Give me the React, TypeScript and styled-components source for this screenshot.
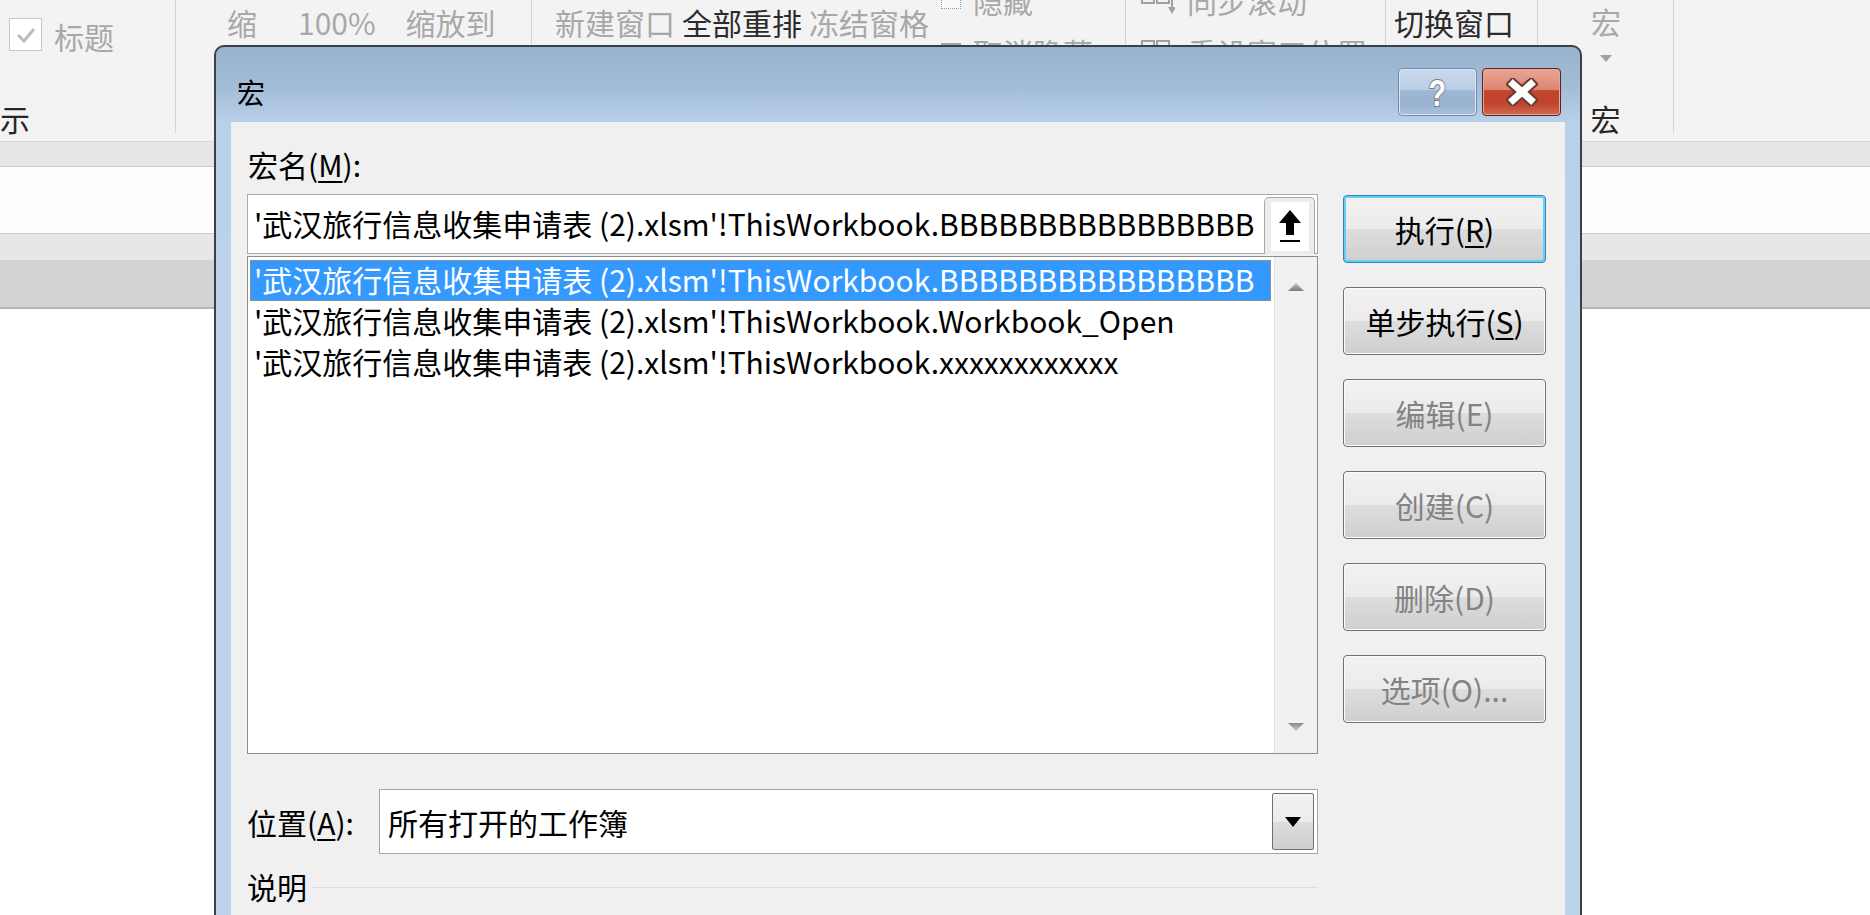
import styled, { createGlobalStyle } from "styled-components";

const GlobalStyle = createGlobalStyle`
  html, body {
    margin: 0;
    padding: 0;
  }
  body {
    overflow: hidden;
    background: #ffffff;
    font-family: "Noto Sans CJK SC", "Noto Sans", sans-serif;
  }
`;

const Screen = styled.div`
  position: relative;
  width: 1870px;
  height: 915px;
  overflow: hidden;
  background: #ffffff;
`;

/* ---------- ribbon behind the dialog ---------- */

const Ribbon = styled.div`
  display: flex;
  height: 141px;
  background: #f3f3f3;
  overflow: hidden;
`;

const Group = styled.div<{ $w: number }>`
  flex: 0 0 ${(p) => p.$w}px;
  display: flex;
  flex-direction: column;
  height: 141px;
`;

const GroupTop = styled.div`
  height: 100px;
  display: flex;
  align-items: flex-start;
`;

const GroupLabel = styled.div<{ $shift?: number; $center?: boolean }>`
  height: 41px;
  font-size: 30px;
  line-height: 36px;
  color: #262626;
  white-space: nowrap;
  text-align: ${(p) => (p.$center ? "center" : "left")};
  margin-left: ${(p) => p.$shift ?? 0}px;
`;

const Divider = styled.div`
  flex: 0 0 1px;
  height: 133px;
  background: #d3d3d3;
`;

const RibbonText = styled.span<{ $x: number; $y?: number; $dim?: boolean }>`
  margin-left: ${(p) => p.$x}px;
  margin-top: ${(p) => p.$y ?? 4}px;
  font-size: 30px;
  line-height: 36px;
  white-space: nowrap;
  color: ${(p) => (p.$dim ? "#a8a8a8" : "#2b2b2b")};
`;

const CheckBox = styled.span`
  margin: 18px 0 0 9px;
  width: 31px;
  height: 31px;
  border: 1px solid #c9c9c9;
  background: #ffffff;
  display: flex;
  align-items: center;
  justify-content: center;
`;

const SmallStack = styled.div<{ $x: number }>`
  margin-left: ${(p) => p.$x}px;
  margin-top: -18px;
  display: flex;
  flex-direction: column;
  gap: 16px;
`;

const SmallRow = styled.div`
  display: flex;
  align-items: center;
  gap: 12px;
  height: 36px;
  font-size: 30px;
  line-height: 36px;
  color: #a8a8a8;
  white-space: nowrap;
`;

const DottedIcon = styled.span`
  width: 18px;
  height: 16px;
  border: 1px dotted #9a9a9a;
  background: #fafafa;
`;

const GreyIcon = styled.span`
  width: 20px;
  height: 18px;
  background: #a5a5a5;
`;

const MacroBig = styled.div`
  margin-left: 53px;
  margin-top: 3px;
  display: flex;
  flex-direction: column;
  align-items: center;
  font-size: 30px;
  line-height: 36px;
  color: #a8a8a8;
`;

/* ---------- sheet bands ---------- */

const NameBand = styled.div`
  height: 26px;
  box-sizing: border-box;
  background: #e6e6e6;
  border-top: 1px solid #d6d6d6;
  border-bottom: 1px solid #cccccc;
`;

const FormulaBar = styled.div`
  height: 66px;
  background: #fdfdfd;
`;

const HeaderBand = styled.div`
  height: 27px;
  box-sizing: border-box;
  background: #e7e7e7;
  border-top: 1px solid #cdcdcd;
`;

const ColumnHeaders = styled.div`
  height: 49px;
  box-sizing: border-box;
  background: #d3d3d3;
  border-bottom: 2px solid #b6b6b6;
`;

/* ---------- dialog ---------- */

const Dialog = styled.div`
  position: absolute;
  left: 214px;
  top: 45px;
  width: 1368px;
  height: 900px;
  box-sizing: border-box;
  border: 2px solid #3b4048;
  border-bottom: none;
  border-radius: 10px 10px 0 0;
  background: linear-gradient(
    to bottom,
    #98b3d0 0px,
    #a3bcd7 40px,
    #b8d0e9 75px,
    #bcd3ea 300px,
    #bcd3ea 100%
  );
  padding: 0 15px;
  display: flex;
  flex-direction: column;
`;

const TitleBar = styled.div`
  height: 75px;
  flex: 0 0 75px;
  display: flex;
  align-items: flex-start;
`;

const Title = styled.div`
  margin: 27px 0 0 6px;
  font-size: 28px;
  line-height: 36px;
  color: #000000;
  flex: 1;
`;

const CaptionButton = styled.div<{ $close?: boolean }>`
  margin-top: 21px;
  margin-left: ${(p) => (p.$close ? 5 : 0)}px;
  margin-right: ${(p) => (p.$close ? 4 : 0)}px;
  width: 79px;
  height: 48px;
  box-sizing: border-box;
  border-radius: 4px;
  border: 1px solid ${(p) => (p.$close ? "#5a2220" : "#6f8cad")};
  box-shadow: inset 0 0 0 1px ${(p) => (p.$close ? "#e9a796" : "#dbe6f3")};
  background: ${(p) =>
    p.$close
      ? "linear-gradient(to bottom, #e9a696 0%, #dc8670 45%, #c3452e 47%, #c0432d 75%, #cf6a52 100%)"
      : "linear-gradient(to bottom, #c9daee 0%, #b9cde5 45%, #9db7d4 47%, #98b2cf 75%, #a9c1dc 100%)"};
  display: flex;
  align-items: center;
  justify-content: center;
`;

const HelpMark = styled.span`
  font-family: "Liberation Sans", Arial, sans-serif;
  font-weight: 700;
  font-size: 37px;
  line-height: 37px;
  color: #ffffff;
  -webkit-text-stroke: 2px #737a82;
  paint-order: stroke fill;
  transform: scaleX(0.78);
  margin-top: 2px;
`;

const Content = styled.div`
  flex: 1;
  background: #f0f0f0;
  display: grid;
  grid-template-columns: 1071px 203px;
  column-gap: 25px;
  padding: 0 19px 0 16px;
  align-items: start;
`;

const LeftColumn = styled.div`
  display: flex;
  flex-direction: column;
`;

const FieldLabel = styled.div`
  height: 72px;
  box-sizing: border-box;
  padding: 24px 0 0 1px;
  font-size: 30px;
  line-height: 36px;
  color: #000000;
`;

const Mnemonic = styled.u`
  text-decoration-thickness: 2px;
  text-underline-offset: 4px;
`;

const NameInput = styled.div`
  height: 60px;
  box-sizing: border-box;
  border: 1px solid #a9a9a9;
  background: #ffffff;
  display: flex;
  align-items: flex-start;
`;

const InputText = styled.div`
  flex: 1;
  padding-left: 6px;
  font-size: 30px;
  line-height: 56px;
  color: #000000;
  white-space: nowrap;
  overflow: hidden;
`;

const CollapseButton = styled.div`
  margin: 2px 2px 0 0;
  width: 51px;
  height: 57px;
  box-sizing: border-box;
  border: 1px solid #a7a7a7;
  border-bottom: none;
  border-radius: 5px 5px 0 0;
  background: #ececec;
  display: flex;
  justify-content: center;
  padding-top: 4px;
`;

const CollapseFace = styled.div`
  width: 38px;
  height: 49px;
  background: #ffffff;
  display: flex;
  align-items: center;
  justify-content: center;
`;

const ListBox = styled.div`
  margin-top: 2px;
  height: 498px;
  box-sizing: border-box;
  border: 1px solid #8a8f96;
  background: #ffffff;
  display: flex;
`;

const ListRows = styled.div`
  flex: 1;
  padding: 3px 3px 0 2px;
`;

const ListRow = styled.div<{ $selected?: boolean }>`
  height: 41px;
  box-sizing: border-box;
  padding-left: 4px;
  font-size: 30px;
  line-height: 39px;
  white-space: nowrap;
  overflow: hidden;
  color: ${(p) => (p.$selected ? "#ffffff" : "#000000")};
  background: ${(p) => (p.$selected ? "#3399ff" : "transparent")};
  outline: ${(p) => (p.$selected ? "1px dotted #d08a3c" : "none")};
  outline-offset: -1px;
`;

const ScrollTrack = styled.div`
  flex: 0 0 43px;
  box-sizing: border-box;
  background: #f1f1f1;
  border-left: 1px solid #e4e4e4;
  display: flex;
  flex-direction: column;
  align-items: center;
  justify-content: space-between;
  padding: 25px 0 21px;
`;

const LocationRow = styled.div`
  margin-top: 35px;
  height: 65px;
  display: flex;
  align-items: center;
`;

const LocationLabel = styled.div`
  flex: 0 0 132px;
  font-size: 30px;
  line-height: 36px;
  color: #000000;
`;

const Combo = styled.div`
  flex: 1;
  height: 65px;
  box-sizing: border-box;
  border: 1px solid #a5a5a5;
  background: #ffffff;
  display: flex;
  align-items: center;
  padding: 3px 3px 3px 8px;
`;

const ComboText = styled.div`
  flex: 1;
  font-size: 30px;
  line-height: 36px;
  color: #000000;
`;

const DropButton = styled.div`
  width: 42px;
  height: 57px;
  box-sizing: border-box;
  border: 1px solid #707070;
  border-radius: 2px;
  background: linear-gradient(
    to bottom,
    #f2f2f2 0%,
    #ebebeb 50%,
    #dddddd 50%,
    #cfcfcf 100%
  );
  display: flex;
  align-items: center;
  justify-content: center;
`;

const DescriptionRow = styled.div`
  margin-top: 14px;
  display: flex;
  align-items: center;
  gap: 5px;
  font-size: 30px;
  line-height: 36px;
  color: #000000;
`;

const Rule = styled.div`
  flex: 1;
  height: 1px;
  background: #d5dfe5;
  margin-top: 2px;
`;

const ButtonColumn = styled.div`
  padding-top: 73px;
  display: flex;
  flex-direction: column;
  gap: 24px;
`;

const DialogButton = styled.div<{ $default?: boolean; $disabled?: boolean }>`
  height: 68px;
  box-sizing: border-box;
  border-radius: 4px;
  border: 1px solid ${(p) => (p.$default ? "#3c7fb1" : "#707070")};
  box-shadow: ${(p) =>
    p.$default
      ? "inset 0 0 0 2px #5fd0f8"
      : "inset 0 0 0 1px #fbfbfb"};
  background: linear-gradient(
    to bottom,
    #f2f2f2 0%,
    #ebebeb 50%,
    #dddddd 50%,
    #cfcfcf 100%
  );
  display: flex;
  align-items: center;
  justify-content: center;
  font-size: 30px;
  line-height: 36px;
  color: ${(p) => (p.$disabled ? "#838383" : "#000000")};
`;

const rowPrefix = "'武汉旅行信息收集申请表 (2).xlsm'!ThisWorkbook.";
const macros = ["BBBBBBBBBBBBBBBB", "Workbook_Open", "xxxxxxxxxxxx"];

const buttons = [
  { label: "执行", key: "R", default: true },
  { label: "单步执行", key: "S" },
  { label: "编辑(E)", disabled: true },
  { label: "创建(C)", disabled: true },
  { label: "删除(D)", disabled: true },
  { label: "选项(O)...", disabled: true },
];

function ScrollArrow({ down }: { down?: boolean }) {
  return (
    <svg width="18" height="10" viewBox="0 0 18 10">
      <defs>
        <linearGradient id={down ? "sd" : "su"} x1="0" y1="0" x2="0" y2="1">
          <stop offset="0" stopColor={down ? "#8a8a8a" : "#c4c4c4"} />
          <stop offset="1" stopColor={down ? "#c8c8c8" : "#7d7d7d"} />
        </linearGradient>
      </defs>
      <polygon
        points={down ? "1,1 17,1 9,9" : "9,1 17,9 1,9"}
        fill={`url(#${down ? "sd" : "su"})`}
      />
    </svg>
  );
}

export default function App() {
  return (
    <Screen>
      <GlobalStyle />
      <Ribbon>
        <Group $w={175}>
          <GroupTop>
            <CheckBox>
              <svg width="22" height="18" viewBox="0 0 22 18">
                <polyline
                  points="3,9 9,15 19,3"
                  fill="none"
                  stroke="#bdbdbd"
                  strokeWidth="3"
                />
              </svg>
            </CheckBox>
            <RibbonText $x={12} $y={18} $dim>
              标题
            </RibbonText>
          </GroupTop>
          <GroupLabel $shift={-30}>显示</GroupLabel>
        </Group>
        <Divider />
        <Group $w={355}>
          <GroupTop>
            <RibbonText $x={51} $dim>
              缩
            </RibbonText>
            <RibbonText $x={41} $dim>
              100%
            </RibbonText>
            <RibbonText $x={30} $dim>
              缩放到
            </RibbonText>
          </GroupTop>
          <GroupLabel $center>显示比例</GroupLabel>
        </Group>
        <Divider />
        <Group $w={593}>
          <GroupTop>
            <RibbonText $x={23} $dim>
              新建窗口
            </RibbonText>
            <RibbonText $x={7}>全部重排</RibbonText>
            <RibbonText $x={7} $dim>
              冻结窗格
            </RibbonText>
            <SmallStack $x={12}>
              <SmallRow>
                <DottedIcon />
                隐藏
              </SmallRow>
              <SmallRow>
                <GreyIcon />
                取消隐藏
              </SmallRow>
            </SmallStack>
          </GroupTop>
          <GroupLabel $center>窗口</GroupLabel>
        </Group>
        <Divider />
        <Group $w={259}>
          <GroupTop>
            <SmallStack $x={15}>
              <SmallRow>
                <svg width="34" height="30" viewBox="0 0 34 30">
                  <rect x="1" y="4" width="12" height="14" fill="none" stroke="#a0a0a0" strokeWidth="2" />
                  <rect x="16" y="4" width="12" height="14" fill="none" stroke="#a0a0a0" strokeWidth="2" />
                  <line x1="31" y1="4" x2="31" y2="24" stroke="#a0a0a0" strokeWidth="2" />
                  <polygon points="27,22 35,22 31,29" fill="#a0a0a0" />
                </svg>
                同步滚动
              </SmallRow>
              <SmallRow>
                <svg width="34" height="30" viewBox="0 0 34 30">
                  <rect x="1" y="4" width="12" height="16" fill="none" stroke="#a0a0a0" strokeWidth="2" />
                  <rect x="16" y="4" width="12" height="16" fill="none" stroke="#a0a0a0" strokeWidth="2" />
                </svg>
                重设窗口位置
              </SmallRow>
            </SmallStack>
          </GroupTop>
          <GroupLabel $center>窗口</GroupLabel>
        </Group>
        <Divider />
        <Group $w={151}>
          <GroupTop>
            <RibbonText $x={8} $y={4}>
              切换窗口
            </RibbonText>
          </GroupTop>
          <GroupLabel />
        </Group>
        <Divider />
        <Group $w={135}>
          <GroupTop>
            <MacroBig>
              宏
              <svg width="12" height="7" viewBox="0 0 12 7" style={{ marginTop: 16 }}>
                <polygon points="0,0 12,0 6,7" fill="#a0a0a0" />
              </svg>
            </MacroBig>
          </GroupTop>
          <GroupLabel $center>宏</GroupLabel>
        </Group>
        <Divider />
      </Ribbon>
      <NameBand />
      <FormulaBar />
      <HeaderBand />
      <ColumnHeaders />

      <Dialog>
        <TitleBar>
          <Title>宏</Title>
          <CaptionButton>
            <HelpMark>?</HelpMark>
          </CaptionButton>
          <CaptionButton $close>
            <svg width="32" height="28" viewBox="0 0 32 28">
              <g strokeLinecap="square">
                <line x1="7" y1="6" x2="25" y2="22" stroke="#6a3a33" strokeWidth="11" />
                <line x1="25" y1="6" x2="7" y2="22" stroke="#6a3a33" strokeWidth="11" />
                <line x1="7" y1="6" x2="25" y2="22" stroke="#ffffff" strokeWidth="7" />
                <line x1="25" y1="6" x2="7" y2="22" stroke="#ffffff" strokeWidth="7" />
              </g>
            </svg>
          </CaptionButton>
        </TitleBar>

        <Content>
          <LeftColumn>
            <FieldLabel>
              宏名(<Mnemonic>M</Mnemonic>):
            </FieldLabel>
            <NameInput>
              <InputText>{rowPrefix + macros[0]}</InputText>
              <CollapseButton>
                <CollapseFace>
                  <svg width="24" height="34" viewBox="0 0 24 34">
                    <polygon points="12,0 23,13 1,13" fill="#000000" />
                    <rect x="8" y="12" width="8" height="13" fill="#000000" />
                    <rect x="2" y="30" width="20" height="2" fill="#000000" />
                  </svg>
                </CollapseFace>
              </CollapseButton>
            </NameInput>
            <ListBox>
              <ListRows>
                {macros.map((m, i) => (
                  <ListRow key={m} $selected={i === 0}>
                    {rowPrefix + m}
                  </ListRow>
                ))}
              </ListRows>
              <ScrollTrack>
                <ScrollArrow />
                <ScrollArrow down />
              </ScrollTrack>
            </ListBox>
            <LocationRow>
              <LocationLabel>
                位置(<Mnemonic>A</Mnemonic>):
              </LocationLabel>
              <Combo>
                <ComboText>所有打开的工作簿</ComboText>
                <DropButton>
                  <svg width="16" height="10" viewBox="0 0 16 10">
                    <polygon points="0,0 16,0 8,10" fill="#000000" />
                  </svg>
                </DropButton>
              </Combo>
            </LocationRow>
            <DescriptionRow>
              说明
              <Rule />
            </DescriptionRow>
          </LeftColumn>

          <ButtonColumn>
            {buttons.map((b) => (
              <DialogButton key={b.label} $default={b.default} $disabled={b.disabled}>
                {b.key ? (
                  <span>
                    {b.label}(<Mnemonic>{b.key}</Mnemonic>)
                  </span>
                ) : (
                  b.label
                )}
              </DialogButton>
            ))}
          </ButtonColumn>
        </Content>
      </Dialog>
    </Screen>
  );
}
